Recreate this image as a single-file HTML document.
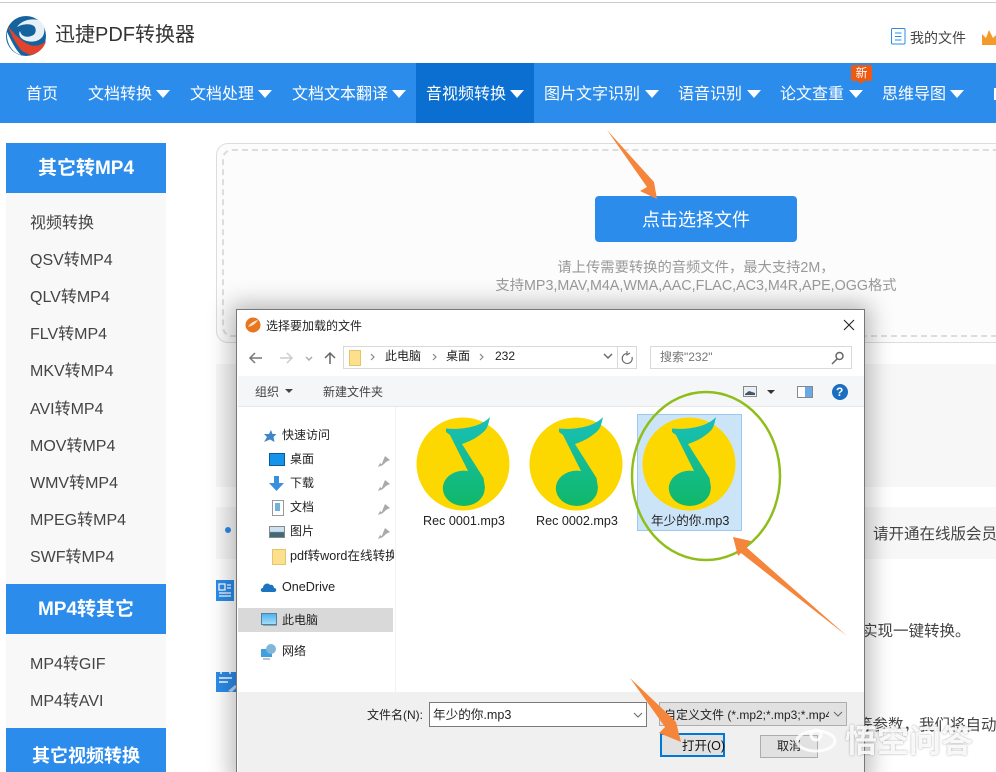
<!DOCTYPE html>
<html><head><meta charset="utf-8"><style>
html,body{margin:0;padding:0;background:#fff}
#p{position:relative;width:996px;height:772px;overflow:hidden;background:#fff;font-family:"Liberation Sans","Noto Sans CJK SC",sans-serif;color:#444}
#p div,#p span.a{position:absolute}
.t{position:absolute;white-space:nowrap;line-height:20px}
.n{font-size:16px;color:#fff;top:83px}
.tr{position:absolute;top:90px;width:0;height:0;border-left:7.500px solid transparent;border-right:7.500px solid transparent;border-top:8px solid #fff}
.s{font-size:16px;color:#444;left:30px}
.h{position:absolute;left:6px;width:160px;background:#2b8cec;color:#fff;font-weight:bold;font-size:19px;text-align:center;line-height:52px}
.d{font-size:12px;color:#222}
.l{font-size:12.600px}
</style></head><body><div id="p">
<div style="left:0;top:2px;width:996px;height:1px;background:#ccc"></div>
<svg style="position:absolute;left:6px;top:16px" width="41" height="41" viewBox="0 0 41 41"><circle cx="20" cy="20" r="20" fill="#14639f"/><path d="M1 16C5 24 9 33 15 39C7 37 0 28 1 16Z" fill="#fff"/><path d="M2 10C8 18 16 26 24 29C30 31 36 29 40 25C38 33 31 38 24 39L16 35C10 28 5 19 2 10Z" fill="#e3432a"/><path d="M11 11C15 5 24 2 32 4C38 7 40 14 37 20C33 26 25 27 18 24C14 22 12 18 14 15C15 20 20 22 25 20C30 19 31 13 28 10C24 7 16 8 11 11Z" fill="#e7f0f7"/></svg>
<span class="t" style="left:55px;top:23px;font-size:20px;line-height:24px;color:#333">迅捷PDF转换器</span>
<svg style="position:absolute;left:891px;top:28px" width="15" height="17" viewBox="0 0 15 17" fill="none" stroke="#2b8cec" stroke-width="1"><rect x=".5" y=".5" width="13.500" height="15.500" rx="1"/><path d="M4 5H10.500M4 8.500H10.500M4 12H10.500"/></svg>
<span class="t" style="left:910px;top:28px;font-size:14px;color:#444">我的文件</span>
<svg style="position:absolute;left:982px;top:28px" width="14" height="18" viewBox="0 0 14 18"><path d="M0 6L4 10L7 2L11 10L15 6V17H0Z" fill="#f39a2b"/></svg>

<div style="left:0;top:63px;width:996px;height:60px;background:#2b8cec"></div>
<div style="left:416px;top:63px;width:118px;height:60px;background:#0a6fd0"></div>
<span class="t n" style="left:26px;top:85px">首页</span>
<span class="t n" style="left:88px;top:85px">文档转换</span><i class="tr" style="left:156px"></i>
<span class="t n" style="left:190px;top:85px">文档处理</span><i class="tr" style="left:258px"></i>
<span class="t n" style="left:292px;top:85px">文档文本翻译</span><i class="tr" style="left:392px"></i>
<span class="t n" style="left:426px;top:85px">音视频转换</span><i class="tr" style="left:510px"></i>
<span class="t n" style="left:544px;top:85px">图片文字识别</span><i class="tr" style="left:645px"></i>
<span class="t n" style="left:678px;top:85px">语音识别</span><i class="tr" style="left:747px"></i>
<span class="t n" style="left:780px;top:85px">论文查重</span><i class="tr" style="left:849px"></i>
<span class="t n" style="left:882px;top:85px">思维导图</span><i class="tr" style="left:950px"></i>
<div style="left:994px;top:88px;width:2px;height:12px;background:#fff"></div>
<div style="left:851px;top:65px;width:21px;height:16px;background:#ee5a12;border-radius:2px;color:#fff;font-size:12px;line-height:16px;text-align:center">新</div>
<div style="left:858px;top:81px;width:0;height:0;border-left:3px solid transparent;border-right:3px solid transparent;border-top:3px solid #ee5a12"></div>

<div style="left:6px;top:193px;width:160px;height:391px;background:#f8f8f8"></div>
<div style="left:6px;top:634px;width:160px;height:94px;background:#f8f8f8"></div>
<div class="h" style="top:143px;height:50px">其它转MP4</div>
<div class="h" style="top:584px;height:50px">MP4转其它</div>
<div class="h" style="top:728px;height:50px;line-height:56px;font-size:18px">其它视频转换</div>
<span class="t s" style="top:214px">视频转换</span>
<span class="t s" style="top:251px">QSV转MP4</span>
<span class="t s" style="top:288px">QLV转MP4</span>
<span class="t s" style="top:325px">FLV转MP4</span>
<span class="t s" style="top:362px">MKV转MP4</span>
<span class="t s" style="top:400px">AVI转MP4</span>
<span class="t s" style="top:437px">MOV转MP4</span>
<span class="t s" style="top:474px">WMV转MP4</span>
<span class="t s" style="top:511px">MPEG转MP4</span>
<span class="t s" style="top:548px">SWF转MP4</span>
<span class="t s" style="top:655px">MP4转GIF</span>
<span class="t s" style="top:692px">MP4转AVI</span>

<div style="left:216px;top:143px;width:800px;height:200px;border:1px solid #ddd;border-radius:12px;background:#fcfcfc;box-sizing:border-box"></div>
<div style="left:222px;top:149px;width:790px;height:188px;border:2px dashed #ddd;border-radius:10px;box-sizing:border-box"></div>
<div style="left:595px;top:196px;width:202px;height:46px;background:#2b8cec;border-radius:4px;color:#fff;font-size:18px;line-height:48px;text-align:center">点击选择文件</div>
<div style="left:396px;top:259px;width:600px;text-align:center;font-size:14.300px;line-height:18px;color:#999">请上传需要转换的音频文件，最大支持2M，<br>支持MP3,MAV,M4A,WMA,AAC,FLAC,AC3,M4R,APE,OGG格式</div>

<div style="left:216px;top:364px;width:780px;height:123px;background:#f7f7f7"></div>
<div style="left:216px;top:507px;width:780px;height:52px;background:#f7f7f7"></div>
<div style="left:225px;top:527px;width:6px;height:6px;border-radius:50%;background:#2b8cec"></div>
<span class="t" style="left:873px;top:525px;font-size:15.500px;color:#444">请开通在线版会员</span>
<span class="t" style="left:862px;top:622px;font-size:15.500px;color:#444">实现一键转换。</span>
<span class="t" style="left:857px;top:716px;font-size:15.500px;color:#444">等参数，我们将自动</span>
<svg style="position:absolute;left:216px;top:580px" width="22" height="22" viewBox="0 0 22 22"><rect width="18" height="21" fill="#2b8cec"/><path d="M3 4H9V10H3ZM11 5H15M11 8H15M3 13H15M3 16H15" fill="none" stroke="#fff" stroke-width="1.300"/></svg>
<svg style="position:absolute;left:216px;top:670px" width="22" height="24" viewBox="0 0 22 24"><rect y="2" width="20" height="20" fill="#2b8cec"/><path d="M3 8H16M3 12H12M5 0V4M14 0V4" stroke="#fff" stroke-width="1.500"/><path d="M12 21L19 15L21 17L16 22Z" fill="#bcd8f5"/></svg>

<!-- dialog -->
<div style="left:237px;top:310px;width:627px;height:470px;background:#fff;outline:1px solid #777;box-shadow:0 0 22px 6px rgba(0,0,0,.28)"></div>
<svg style="position:absolute;left:245px;top:317px" width="16" height="16" viewBox="0 0 16 16"><circle cx="8" cy="8" r="7.500" fill="#e8761e"/><path d="M3 10C5 6 9 4 13 3C11 6 9 8 6 9Z" fill="#fbe2c8"/></svg>
<span class="t d" style="left:266px;top:316px">选择要加载的文件</span>
<svg style="position:absolute;left:843px;top:319px" width="12" height="12"><path d="M1 1L11 11M11 1L1 11" stroke="#222" stroke-width="1.100"/></svg>

<svg style="position:absolute;left:248px;top:350px" width="95" height="16" viewBox="0 0 95 16" fill="none" stroke-width="1.500"><path d="M2 8H14M7 3L2 8L7 13" stroke="#777"/><path d="M32 8H44M39 3L44 8L39 13" stroke="#ccc"/><path d="M58 7L61 10L64 7" stroke="#aaa"/><path d="M82 14V3M77 8L82 3L87 8" stroke="#666"/></svg>
<div style="left:343px;top:346px;width:292px;height:21px;border:1px solid #d9d9d9;box-sizing:content-box"></div>
<div style="left:617px;top:346px;width:1px;height:22px;background:#d9d9d9"></div>
<div style="left:349px;top:350px;width:12px;height:16px;background:#fde08c;border:1px solid #e3c56d;box-sizing:border-box"></div>
<svg style="position:absolute;left:370px;top:352px" width="120" height="10" fill="none" stroke="#888" stroke-width="1.200"><path d="M1 2L4 5L1 8M63 2L66 5L63 8M110 2L113 5L110 8"/></svg>
<span class="t d" style="left:385px;top:346px">此电脑</span>
<span class="t d" style="left:446px;top:346px">桌面</span>
<span class="t d" style="left:495px;top:346px">232</span>
<svg style="position:absolute;left:603px;top:351px" width="32" height="14" fill="none" stroke="#666" stroke-width="1.400"><path d="M1 3L5 7L9 3"/><path d="M29 6A5 5 0 1 1 24 2.500M24 0V4L27 2" stroke-width="1.100"/></svg>
<div style="left:650px;top:346px;width:200px;height:21px;border:1px solid #d9d9d9"></div>
<span class="t d" style="left:660px;top:347px;color:#777">搜索"232"</span>
<svg style="position:absolute;left:831px;top:351px" width="14" height="14" fill="none" stroke="#666" stroke-width="1.500"><circle cx="8.500" cy="5" r="3.500"/><path d="M6 8L1 13"/></svg>

<div style="left:238px;top:376px;width:626px;height:31px;background:#f5f6f7;border-bottom:1px solid #e8e8e8;box-sizing:border-box"></div>
<span class="t d" style="left:255px;top:382px;color:#444">组织</span>
<div style="left:285px;top:389px;border-left:4px solid transparent;border-right:4px solid transparent;border-top:4px solid #444;width:0;height:0"></div>
<span class="t d" style="left:323px;top:382px;color:#444">新建文件夹</span>
<svg style="position:absolute;left:743px;top:384px" width="110" height="16" viewBox="0 0 110 16"><rect x=".5" y="2.500" width="13" height="10" fill="#e9eef3" stroke="#888"/><path d="M2 10L6 7L12 9V11H2Z" fill="#456"/><path d="M24 6H32L28 10Z" fill="#333"/><rect x="54.500" y="2.500" width="15" height="11" fill="#fff" stroke="#888"/><rect x="62" y="3" width="7" height="10" fill="#6aa9e8"/><circle cx="97" cy="8" r="8" fill="#1a6fc0"/></svg>
<span class="t" style="left:836px;top:382px;font-size:12px;font-weight:bold;color:#fff">?</span>

<div style="left:395px;top:407px;width:1px;height:285px;background:#f2f2f2"></div>
<svg style="position:absolute;left:263px;top:429px" width="14" height="14" viewBox="0 0 14 14"><path d="M8 1L9.500 5H13.500L10.500 8L11.500 13L7 10.500L1 13L4 8L1 5H6Z" fill="#3f85c8"/></svg>
<span class="t d" style="left:282px;top:425px">快速访问</span>
<div style="left:269px;top:453px;width:14px;height:11px;background:#1294ea;border:1px solid #0b5a9c"></div>
<span class="t d" style="left:290px;top:449px">桌面</span>
<svg style="position:absolute;left:269px;top:476px" width="16" height="16" viewBox="0 0 16 16"><path d="M5 0H10V7H15L7.500 15L0 7H5Z" fill="#3a8fdd"/></svg>
<span class="t d" style="left:290px;top:473px">下载</span>
<div style="left:272px;top:500px;width:10px;height:14px;background:#fff;border:1px solid #999"></div>
<div style="left:275px;top:503px;width:5px;height:8px;background:#6fb1df"></div>
<span class="t d" style="left:290px;top:497px">文档</span>
<div style="left:269px;top:526px;width:14px;height:10px;background:linear-gradient(#cfe0ee 45%,#3f6a76 55%);border:1px solid #888"></div>
<span class="t d" style="left:290px;top:521px">图片</span>
<div style="left:272px;top:549px;width:12px;height:14px;background:#fde08c;border:1px solid #e3c56d"></div>
<div style="left:290px;top:546px;width:104px;height:20px;overflow:hidden"><span class="t d l" style="left:0;top:0">pdf转word在线转换</span></div>
<svg style="position:absolute;left:376px;top:454px" width="16" height="90" fill="#aaa"><path d="M5 12L9 2L14 6L10 8L8 10ZM4 9L7 11L2 13Z"/><path d="M5 36L9 26L14 30L10 32L8 34ZM4 33L7 35L2 37Z"/><path d="M5 60L9 50L14 54L10 56L8 58ZM4 57L7 59L2 61Z"/><path d="M5 84L9 74L14 78L10 80L8 82ZM4 81L7 83L2 85Z"/></svg>
<svg style="position:absolute;left:260px;top:581px" width="17" height="12" viewBox="0 0 17 12"><path d="M3 11C0 11 0 7 3 7C3 3 8 1 10 4C13 3 14 6 14 7C17 7 17 11 14 11Z" fill="#1b74bf"/></svg>
<span class="t d l" style="left:282px;top:577px">OneDrive</span>
<div style="left:238px;top:608px;width:155px;height:24px;background:#d9d9d9"></div>
<div style="left:261px;top:613px;width:14px;height:10px;background:linear-gradient(#4db2f2,#a5dcf9);border:1px solid #5a7f9a"></div>
<div style="left:263px;top:625px;width:14px;height:1px;background:#8aa"></div>
<span class="t d" style="left:282px;top:610px">此电脑</span>
<svg style="position:absolute;left:260px;top:643px" width="17" height="17" viewBox="0 0 17 17"><rect x="1" y="6" width="11" height="8" fill="#3fa0e0"/><circle cx="11" cy="6" r="5" fill="#7fb6da"/><path d="M3 16H10" stroke="#888"/></svg>
<span class="t d" style="left:282px;top:641px">网络</span>

<div style="left:637px;top:414px;width:105px;height:117px;background:#cce4f8;border:1px solid #9dc9ee;box-sizing:border-box"></div>
<svg width="0" height="0" style="position:absolute"><defs><linearGradient id="g" gradientUnits="userSpaceOnUse" x1="0" y1="5" x2="0" y2="90"><stop offset="0" stop-color="#18bfb5"/><stop offset="1" stop-color="#10b868"/></linearGradient>
</defs></svg>
<svg style="position:absolute;left:416px;top:417px" width="94" height="94" viewBox="0 0 94 94"><circle cx="47" cy="47" r="46.500" fill="#fdd800"/><path d="M30 11.500C45 13 65 10 74 0C72 8 72 12 65 17C59 22 52 25 46 27L67.500 61L69 71L52 54L34 18L30 15Z" fill="url(#g)"/><ellipse cx="47.800" cy="71.300" rx="21" ry="17.700" fill="url(#g)"/></svg>
<svg style="position:absolute;left:529px;top:417px" width="94" height="94" viewBox="0 0 94 94"><circle cx="47" cy="47" r="46.500" fill="#fdd800"/><path d="M30 11.500C45 13 65 10 74 0C72 8 72 12 65 17C59 22 52 25 46 27L67.500 61L69 71L52 54L34 18L30 15Z" fill="url(#g)"/><ellipse cx="47.800" cy="71.300" rx="21" ry="17.700" fill="url(#g)"/></svg>
<svg style="position:absolute;left:642px;top:417px" width="94" height="94" viewBox="0 0 94 94"><circle cx="47" cy="47" r="46.500" fill="#fdd800"/><path d="M30 11.500C45 13 65 10 74 0C72 8 72 12 65 17C59 22 52 25 46 27L67.500 61L69 71L52 54L34 18L30 15Z" fill="url(#g)"/><ellipse cx="47.800" cy="71.300" rx="21" ry="17.700" fill="url(#g)"/></svg>
<span class="t d l" style="left:423px;top:511px">Rec 0001.mp3</span>
<span class="t d l" style="left:536px;top:511px">Rec 0002.mp3</span>
<span class="t d l" style="left:651px;top:511px">年少的你.mp3</span>

<div style="left:238px;top:692px;width:626px;height:80px;background:#f0f0f0"></div>
<span class="t d" style="left:367px;top:705px">文件名(N):</span>
<div style="left:429px;top:702px;width:216px;height:23px;background:#fff;border:1px solid #7a7a7a"></div>
<span class="t d l" style="left:433px;top:705px">年少的你.mp3</span>
<svg style="position:absolute;left:633px;top:712px" width="10" height="6" fill="none" stroke="#666"><path d="M1 1L5 5L9 1"/></svg>
<div style="left:659px;top:702px;width:186px;height:22px;background:#e1e1e1;border:1px solid #adadad"></div>
<div style="left:664px;top:705px;width:165px;height:20px;overflow:hidden"><span class="t d" style="left:0;top:0">自定义文件 (*.mp2;*.mp3;*.mp4</span></div>
<svg style="position:absolute;left:833px;top:711px" width="10" height="6" fill="none" stroke="#666"><path d="M1 1L5 5L9 1"/></svg>
<div style="left:660px;top:733px;width:61px;height:20px;background:#e1e1e1;border:2px solid #0078d7"></div>
<span class="t" style="left:682px;top:736px;font-size:12.500px;color:#111">打开(O)</span>
<div style="left:760px;top:735px;width:56px;height:21px;background:#e1e1e1;border:1px solid #adadad;text-align:center;font-size:12px;line-height:21px;color:#222">取消</div>

<svg style="position:absolute;left:0;top:0" width="996" height="772" viewBox="0 0 996 772">
<ellipse cx="706" cy="476" rx="74" ry="84" fill="none" stroke="#8fbe1a" stroke-width="2.500"/>
<path d="M607 130L654 182L657 199L640 191L647 187Z" fill="#f5853a"/>
<path d="M733 537L751 541L746 547L847 636L741 553L738 556Z" fill="#f5853a"/>
<path d="M630 678L670 716L676 722L681 742L659 733L665 727Z" fill="#f5853a"/>
<g fill="none" stroke="#fff" stroke-opacity=".85" stroke-width="3"><ellipse cx="816" cy="741" rx="19" ry="10"/><circle cx="816" cy="735" r="5"/></g>
</svg>
<span class="t" style="left:845px;top:722px;font-size:32px;line-height:38px;color:rgba(255,255,255,.9);font-weight:bold;text-shadow:0 0 2px rgba(0,0,0,.35)">悟空问答</span>
</div></body></html>
